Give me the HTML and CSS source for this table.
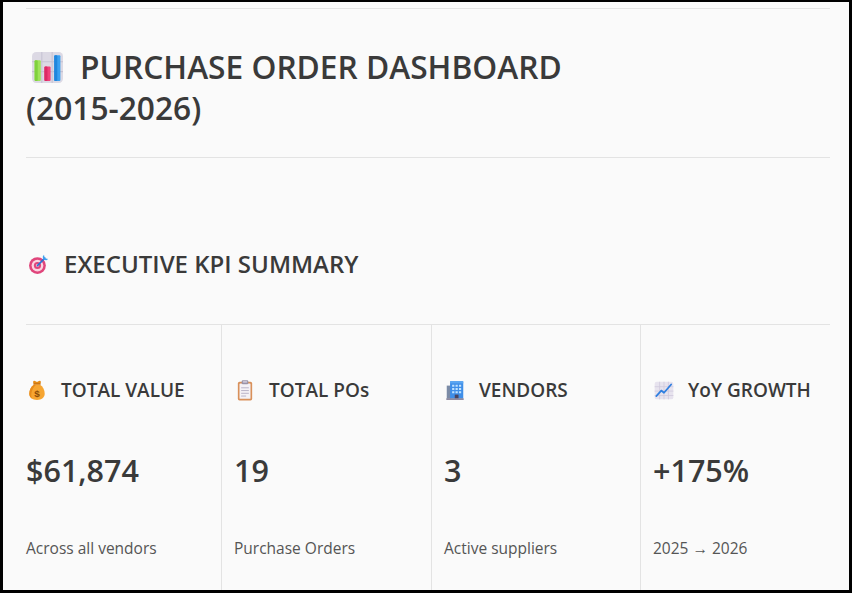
FILE: index.html
```html
<!DOCTYPE html>
<html lang="en">
<head>
<meta charset="utf-8">
<title>Purchase Order Dashboard</title>
<link rel="stylesheet" href="styles.css">
</head>
<body>
<div class="frame">
  <hr class="rule rule-top">
  <h1 class="title">
    <svg class="ico ico-title" viewBox="0 0 32 32" aria-hidden="true">
      <rect x="1" y="1" width="30" height="30" rx="4" fill="#dcd9e4"/>
      <path d="M1 10.5H31M1 20H31M10.5 1V31M20.5 1V31" stroke="#c6c2d2" stroke-width="1"/>
      <rect x="3.5" y="9" width="6" height="20" rx="1" fill="#9fe35a"/>
      <rect x="3.5" y="9" width="3" height="20" rx="1" fill="#7fd13c"/>
      <rect x="13" y="15" width="6" height="14" rx="1" fill="#f0407a"/>
      <rect x="13" y="15" width="3" height="14" rx="1" fill="#dc2a65"/>
      <rect x="22.5" y="4" width="6" height="25" rx="1" fill="#3aa0f0"/>
      <rect x="22.5" y="4" width="3" height="25" rx="1" fill="#2186dc"/>
    </svg>PURCHASE ORDER DASHBOARD<br>(2015-2026)
  </h1>
  <hr class="rule">
  <h2 class="section">
    <svg class="ico ico-h2" viewBox="0 0 20 20" aria-hidden="true">
      <circle cx="9" cy="11" r="8" fill="#e0457b"/>
      <circle cx="9" cy="11" r="5.6" fill="#fbd3e0"/>
      <circle cx="9" cy="11" r="3.4" fill="#e0457b"/>
      <circle cx="9" cy="11" r="1.4" fill="#fbd3e0"/>
      <path d="M9 11L16 4" stroke="#2d6fd0" stroke-width="1.6" stroke-linecap="round"/>
      <path d="M14 2.5L15.2 0.8 16 4 19.2 4.8 17.5 6 14.6 5.4Z" fill="#3aa0f0"/>
    </svg>EXECUTIVE KPI SUMMARY
  </h2>
  <hr class="rule">
  <div class="kpis">
    <div class="kpi">
      <div class="kpi-label">
        <svg class="ico ico-kpi" viewBox="0 0 20 20" aria-hidden="true">
          <path d="M7 4.5C6 3 6.5 1.5 7.5 1.6 8.5 1.7 9 2.6 10 2.6 11 2.6 11.5 1.7 12.5 1.6 13.5 1.5 14 3 13 4.5Z" fill="#e38a16"/>
          <path d="M7.2 4.6H12.8" stroke="#b8620a" stroke-width="1.2" stroke-linecap="round"/>
          <path d="M7.5 5C4.5 6.8 3 10 3 13.5 3 17 5.8 19 10 19 14.2 19 17 17 17 13.5 17 10 15.5 6.8 12.5 5Z" fill="#f6a531"/>
          <path d="M7.5 5C4.5 6.8 3 10 3 13.5 3 15.5 4 17 5.6 18 4.8 16.5 4.6 14.5 5 12.5 5.6 9.5 7 7 9 5.4Z" fill="#e88b1a"/>
          <text x="10" y="16.4" text-anchor="middle" font-family="Liberation Sans, sans-serif" font-weight="700" font-size="9" fill="#8a4a06">$</text>
        </svg>TOTAL VALUE
      </div>
      <div class="kpi-value">$61,874</div>
      <div class="kpi-sub">Across all vendors</div>
    </div>
    <div class="kpi">
      <div class="kpi-label">
        <svg class="ico ico-kpi" viewBox="0 0 20 20" aria-hidden="true">
          <rect x="3.5" y="2.5" width="13" height="17" rx="1.5" fill="#d9905a"/>
          <rect x="5" y="4" width="10" height="14" rx="0.6" fill="#f4f1f6"/>
          <path d="M6.5 8H13.5M6.5 10.5H13.5M6.5 13H13.5M6.5 15.5H11" stroke="#b9b3c8" stroke-width="0.9"/>
          <rect x="7" y="1.2" width="6" height="3.6" rx="1" fill="#9a93a8"/>
          <rect x="8" y="1.8" width="4" height="1.6" rx="0.6" fill="#c9c3d4"/>
        </svg>TOTAL POs
      </div>
      <div class="kpi-value">19</div>
      <div class="kpi-sub">Purchase Orders</div>
    </div>
    <div class="kpi">
      <div class="kpi-label">
        <svg class="ico ico-kpi" viewBox="0 0 20 20" aria-hidden="true">
          <rect x="2.5" y="6" width="4" height="12" fill="#7b8ba6"/>
          <rect x="5.5" y="2" width="12" height="16" rx="0.6" fill="#3f8ee8"/>
          <rect x="5.5" y="2" width="12" height="2" fill="#5aa6f2"/>
          <path d="M7.4 5.2h2v1.8h-2zM10.5 5.2h2v1.8h-2zM13.6 5.2h2v1.8h-2zM7.4 8.2h2v1.8h-2zM10.5 8.2h2v1.8h-2zM13.6 8.2h2v1.8h-2zM7.4 11.2h2v1.8h-2zM10.5 11.2h2v1.8h-2zM13.6 11.2h2v1.8h-2z" fill="#bfe2ff"/>
          <rect x="9.8" y="14.2" width="3.4" height="3.8" fill="#4a4560"/>
          <rect x="2" y="17.6" width="16" height="1.4" rx="0.5" fill="#8f8aa0"/>
        </svg>VENDORS
      </div>
      <div class="kpi-value">3</div>
      <div class="kpi-sub">Active suppliers</div>
    </div>
    <div class="kpi">
      <div class="kpi-label">
        <svg class="ico ico-kpi" viewBox="0 0 20 20" aria-hidden="true">
          <rect x="1.5" y="2.5" width="17" height="16" rx="2" fill="#e7e3ee"/>
          <path d="M1.5 7H18.5M1.5 11H18.5M1.5 15H18.5M6 2.5V18.5M10 2.5V18.5M14 2.5V18.5" stroke="#cfc8dc" stroke-width="0.7"/>
          <path d="M3 15.5L7.5 10.5 10 12.5 16.5 5" fill="none" stroke="#2f7fe0" stroke-width="1.6" stroke-linecap="round" stroke-linejoin="round"/>
        </svg>YoY GROWTH
      </div>
      <div class="kpi-value">+175%</div>
      <div class="kpi-sub">2025 → 2026</div>
    </div>
  </div>
</div>
</body>
</html>
```
FILE: styles.css
```css
* { box-sizing: border-box; }
html, body { margin: 0; padding: 0; }
body {
  width: 852px;
  height: 593px;
  overflow: hidden;
  background: #000;
}
.frame {
  width: 852px;
  height: 593px;
  border-style: solid;
  border-color: #000;
  border-width: 2px 3px 3px 3px;
  background: #fafafa;
  padding: 6px 19px 0 23px;
  font-family: "Open Sans", "Noto Sans", sans-serif;
  color: #3a3a3a;
  overflow: hidden;
  display: flex;
  flex-direction: column;
}
.rule {
  border: 0;
  height: 1px;
  background: #e3e3e3;
  margin: 0;
  flex: none;
}
.title {
  font-size: 31.7px;
  line-height: 41px;
  font-weight: 600;
  margin: 37px 0 29px;
}
.ico { display: inline-block; vertical-align: middle; }
.ico-title {
  width: 33px;
  height: 33px;
  margin: -6px 16px 0 5px;
}
.section {
  font-size: 24px;
  line-height: 32px;
  font-weight: 600;
  margin: 90px 0 44px;
}
.ico-h2 {
  width: 21px;
  height: 21px;
  margin: -4px 15px 0 2px;
}
.kpis {
  display: grid;
  grid-template-columns: 195px 210px 209px 190px;
  flex: 1;
}
.kpi {
  padding: 51px 0 0 12px;
  border-left: 1px solid #e3e3e3;
}
.kpi:first-child {
  padding-left: 0;
  border-left: 0;
}
.kpi-label {
  font-size: 19px;
  line-height: 28px;
  font-weight: 600;
  white-space: nowrap;
}
.ico-kpi {
  width: 22px;
  height: 22px;
  margin: -4px 13px 0 0;
}
.kpi-value {
  margin-top: 46px;
  font-size: 30.5px;
  line-height: 40px;
  font-weight: 600;
}
.kpi-sub {
  margin-top: 47px;
  font-size: 15.5px;
  line-height: 22px;
  color: #555;
}
```
